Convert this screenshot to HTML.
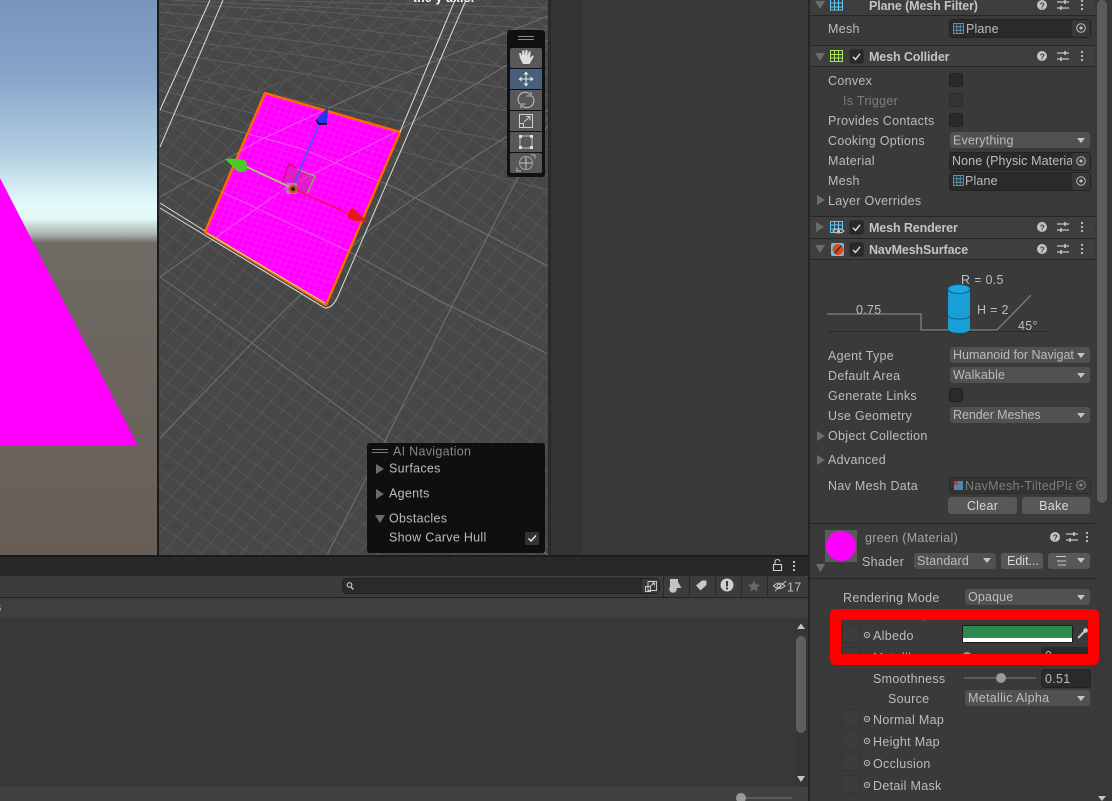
<!DOCTYPE html>
<html><head><meta charset="utf-8"><title>Unity Editor</title>
<style>
html,body{margin:0;padding:0;background:#383838;overflow:hidden}
svg{display:block;position:absolute;left:0;top:0;filter:blur(.3px)}
text{font-family:"Liberation Sans",sans-serif;font-size:12.5px;letter-spacing:.3px;fill:#bcbcbc}
.b{font-weight:bold;fill:#c4c4c4;letter-spacing:-.12px}
.d{fill:#7d7d7d}
.w{fill:#d8d8d8}
.dd{letter-spacing:.15px}
</style></head><body>
<svg width="1112" height="801" viewBox="0 0 1112 801" xmlns="http://www.w3.org/2000/svg">
<defs>
<linearGradient id="sky" x1="0" y1="0" x2="0" y2="1">
<stop offset="0" stop-color="#7896bb"/><stop offset=".3" stop-color="#86a4c9"/><stop offset=".62" stop-color="#b0cde0"/><stop offset=".84" stop-color="#e2faf9"/><stop offset=".9" stop-color="#e2f8f5"/><stop offset=".965" stop-color="#a8b2ae"/><stop offset="1" stop-color="#6f6b65"/>
</linearGradient>
<linearGradient id="gnd" x1="0" y1="0" x2="0" y2="1"><stop offset="0" stop-color="#6f6a64"/><stop offset="1" stop-color="#675e57"/></linearGradient>
<pattern id="p1" width="15" height="15" patternUnits="userSpaceOnUse" patternTransform="rotate(36)"><path d="M0 .5H15" stroke="#fff" stroke-opacity=".07"/></pattern>
<pattern id="p2" width="15" height="15" patternUnits="userSpaceOnUse" patternTransform="rotate(-50)"><path d="M0 .5H15" stroke="#fff" stroke-opacity=".07"/></pattern>
<pattern id="p3" width="6" height="6" patternUnits="userSpaceOnUse" patternTransform="rotate(16)"><path d="M0 .5H6" stroke="#ffa0ff" stroke-opacity=".13"/></pattern>
<pattern id="p4" width="6" height="6" patternUnits="userSpaceOnUse" patternTransform="rotate(-67)"><path d="M0 .5H6" stroke="#ffa0ff" stroke-opacity=".13"/></pattern>
<clipPath id="sc"><rect x="159" y="0" width="389" height="555"/></clipPath>
<clipPath id="rc"><rect x="841" y="620" width="247" height="34"/></clipPath>
<g id="tri-r"><path d="M0 0L8 5L0 10Z" fill="#6c6c6c"/></g>
<g id="tri-d"><path d="M0 0H10L5 8Z" fill="#6c6c6c"/></g>
<g id="hdr"><circle cx="0" cy="0" r="5" fill="#c4c4c4"/><text x="-2.400" y="3.400" style="font-size:8.500px;font-weight:bold;fill:#3c3c3c;letter-spacing:0">?</text>
<path d="M15 -3H27M15 3H27" stroke="#c4c4c4" stroke-width="1.200"/><path d="M23 -5V-1M19 1V5" stroke="#c4c4c4" stroke-width="1.600"/>
<circle cx="40" cy="-4" r="1.100" fill="#c4c4c4"/><circle cx="40" cy="0" r="1.100" fill="#c4c4c4"/><circle cx="40" cy="4" r="1.100" fill="#c4c4c4"/></g>
<g id="chk"><rect x="0" y="0" width="13" height="13" rx="2" fill="#2a2a2a" stroke="#212121"/><path d="M3 6.800L5.500 9.400L10 3.800" fill="none" stroke="#e0e0e0" stroke-width="1.400"/></g>
<g id="box"><rect x=".5" y=".5" width="13" height="13" rx="2" fill="#2a2a2a" stroke="#212121"/></g>
<g id="mesh"><path d="M.5 .5H10.500V10.500H.5ZM3.800 .5V10.500M7.200 .5V10.500M.5 3.800H10.500M.5 7.200H10.500" fill="none" stroke="#5da8c8" stroke-width="1" opacity=".85"/></g>
<g id="tgt"><circle cx="0" cy="0" r="4.300" fill="none" stroke="#bdbdbd"/><circle cx="0" cy="0" r="1.600" fill="#bdbdbd"/></g>
<g id="pick"><circle cx="0" cy="0" r="2.600" fill="none" stroke="#b8b8b8"/><circle cx="0" cy="0" r=".8" fill="#b8b8b8"/></g>
<g id="sq"><rect x=".5" y=".5" width="17" height="17" fill="#3c3c3c" stroke="#343434"/></g>
<g id="arr"><path d="M0 0H8L4 5Z" fill="#c4c4c4"/></g>
</defs>

<!-- base -->
<rect width="1112" height="801" fill="#383838"/>

<!-- game view -->
<rect x="0" y="0" width="157" height="243" fill="url(#sky)"/>
<rect x="0" y="243" width="157" height="312" fill="url(#gnd)"/>
<path d="M0 178L137.500 445H0Z" fill="#ff00ff"/>
<rect x="157" y="0" width="2" height="555" fill="#1b1b1b"/>

<!-- scene view -->
<g clip-path="url(#sc)">
<rect x="159" y="0" width="389" height="555" fill="#474747"/>
<rect x="159" y="0" width="389" height="555" fill="url(#p1)"/>
<rect x="159" y="0" width="389" height="555" fill="url(#p2)"/>
<g fill="none" stroke="#5e5e5e" stroke-width="1">
<path d="M159 12L300 24L548 50M159 24L330 45L548 72M159 38L300 55L548 95M159 52L300 73L548 118M159 72L320 105L548 150M159 90L300 125L548 190"/>
<path d="M159 4L300 10L548 30M170 0L548 18M250 0L548 8"/>
<path d="M159 34L250 18L350 0M159 60L300 30L420 0M159 90L300 50L480 0M159 130L300 75L548 8" stroke="#565656"/>
</g>
<g fill="none" stroke="#727272" stroke-width="1">
<path d="M160 110L300 148L400 190L548 266"/>
<path d="M160 163L346 250L438 300L546 353"/>
<path d="M160 277L193 300L252 343L385 441L548 555"/>
<path d="M160 197L260 140L400 75L548 16"/>
<path d="M160 277L287 187L400 130L548 40"/>
<path d="M160 438L252 343L295 300L373 227L470 160L548 110"/>
<path d="M327 555L385 441L455 300L515 183L548 125"/>
</g>
<path d="M205 232L265 93L400 132L326 305Z" fill="#ff00ff"/>
<clipPath id="qc"><path d="M205 232L265 93L400 132L326 305Z"/></clipPath>
<g clip-path="url(#qc)">
<rect x="200" y="90" width="205" height="220" fill="url(#p3)"/>
<rect x="200" y="90" width="205" height="220" fill="url(#p4)"/>
<g fill="none" stroke="#e070e0" stroke-width="1" opacity=".8">
<path d="M160 163L346 250L438 300M160 277L287 187L400 130M160 110L300 148L400 190M160 197L260 140L400 75"/>
</g>
</g>
<path d="M205 232L265 93L400 132L326 305Z" fill="none" stroke="#ff6a00" stroke-width="2.400" stroke-linejoin="round"/>
<path d="M207 233L325 303" stroke="#c4f08c" stroke-width="1" fill="none"/>
<g fill="none" stroke="#dcdcdc" stroke-width="1">
<path d="M210 0L160 110M223 0L160 147M455 0L400 132"/>
<path d="M466 0L338 296Q333 308 325 308L160 208M160 203L205 231"/>
</g>
<!-- gizmo -->
<path d="M282 183L289 164L315 176L307 195Z" fill="#c830a0" fill-opacity=".55"/>
<path d="M282 183L289 164L297 168" fill="none" stroke="#d00060" stroke-width="1"/>
<path d="M297 169L315 176L307 194" fill="none" stroke="#80d050" stroke-width="1"/>
<path d="M292 188L247 167" stroke="#a8d868" stroke-width="1.600"/>
<path d="M292 188L349 214" stroke="#f01048" stroke-width="1.400"/>
<path d="M292 188L322 118" stroke="#5050ff" stroke-width="1.600"/>
<path d="M225 159Q236 158 245 160Q249 166 246 171Q240 174 236 170Z" fill="#50c828"/>
<path d="M368 222L353 208Q347 211 348 217Q350 221 357 221Z" fill="#e81818"/>
<path d="M328 107L316 120L318 123L327 124Z" fill="#2038ee"/>
<path d="M316 120L319 124L327 124" stroke="#0a0a30" stroke-width="1.600" fill="none"/>
<rect x="286" y="183" width="11" height="11" rx="2" fill="#c090d8" opacity=".7"/>
<circle cx="293" cy="189" r="4.500" fill="#c06010"/>
<circle cx="293" cy="189" r="2.200" fill="#302010"/>
<text x="413" y="2" style="font-weight:bold;fill:#fff;font-size:12px">the y axis.</text>

<!-- tools overlay -->
<rect x="507" y="30" width="38" height="147" rx="3" fill="#111"/>
<path d="M518 36.500H534M518 39.500H534" stroke="#8a8a8a"/>
<g fill="#585858">
<rect x="510" y="48" width="32" height="20" rx="2"/>
<rect x="510" y="90" width="32" height="20"/>
<rect x="510" y="111" width="32" height="20"/>
<rect x="510" y="132" width="32" height="20"/>
<rect x="510" y="153" width="32" height="20" rx="2"/>
</g>
<rect x="510" y="69" width="32" height="20" fill="#46607c"/>
<!-- hand -->
<path d="M520 58L519 53.500Q520 52 521 53.500L522 56L522.300 51Q523.300 49.600 524.300 51L524.800 55.500L525.500 50.500Q526.500 49.200 527.500 50.500L527.500 55.500L529 51.500Q530 50.800 530.700 52L530 58L532.500 55.500Q534 55.500 533.500 57L529.500 64H523Z" fill="#dedede"/>
<!-- move -->
<path d="M526 73V85M520 79H532" stroke="#e4e4e4" stroke-width="1"/>
<path d="M526 71.500L528.500 74.500H523.500ZM526 86.500L528.500 83.500H523.500ZM518.500 79L521.500 76.500V81.500ZM533.500 79L530.500 76.500V81.500Z" fill="#e8e8e8"/>
<!-- rotate -->
<path d="M520 104A6.800 6.800 0 0 1 530 94.500M532 96A6.800 6.800 0 0 1 522 105.500" fill="none" stroke="#bcbcbc" stroke-width="1.100"/>
<path d="M531 91.500V96H526.500M521 108.500V104H525.500" fill="none" stroke="#bcbcbc" stroke-width="1"/>
<!-- scale -->
<path d="M519.500 114.500H532.500V127.500H519.500ZM519.500 123.500H523.500V127.500M524 122L530 116.500M526 116.500H530V120.500" fill="none" stroke="#d0d0d0" stroke-width="1"/>
<!-- rect -->
<path d="M521 136H531M521 148H531M520 137V147M532 137V147" stroke="#c0c0c0"/>
<g fill="#dedede"><rect x="519" y="135" width="3" height="3"/><rect x="530" y="135" width="3" height="3"/><rect x="519" y="146" width="3" height="3"/><rect x="530" y="146" width="3" height="3"/></g>
<!-- transform -->
<circle cx="526" cy="163" r="6.500" fill="none" stroke="#a4a4a4"/>
<path d="M526 157V169M520 163H532" stroke="#c4c4c4"/>
<path d="M531 155H535V158.500M521 171H517V167.500" fill="none" stroke="#b4b4b4"/>

<!-- AI nav overlay -->
<rect x="367" y="443" width="178" height="110" rx="3" fill="#0f0f0f"/>
<path d="M372 449.500H388M372 452.500H388" stroke="#7a7a7a"/>
<text x="393" y="455.500" class="d" style="fill:#888">AI Navigation</text>
<use href="#tri-r" x="376" y="464"/><text x="389" y="472.500">Surfaces</text>
<use href="#tri-r" x="376" y="489"/><text x="389" y="497.500">Agents</text>
<use href="#tri-d" x="375" y="515"/><text x="389" y="522.500">Obstacles</text>
<text x="389" y="541.500">Show Carve Hull</text>
<rect x="525" y="532" width="14" height="13" rx="1.500" fill="#333"/>
<path d="M528.500 538.500L531 541L536 535.500" fill="none" stroke="#e8e8e8" stroke-width="1.400"/>
</g>

<!-- strip between scene and inspector -->
<rect x="548" y="0" width="3" height="555" fill="#2a2a2a"/>
<rect x="551" y="0" width="30" height="555" fill="#333"/>
<rect x="581" y="0" width="227" height="555" fill="#383838"/>

<!-- bottom panel -->
<rect x="0" y="555" width="808" height="2" fill="#1c1c1c"/>
<rect x="0" y="557" width="808" height="19" fill="#282828"/>
<rect x="0" y="576" width="808" height="21" fill="#3c3c3c"/>
<rect x="0" y="597" width="808" height="1" fill="#232323"/>
<rect x="0" y="598" width="808" height="20" fill="#3f3f3f"/>
<rect x="0" y="618" width="795" height="169" fill="#383838"/>
<rect x="795" y="618" width="13" height="169" fill="#363636"/>
<rect x="796" y="636" width="10" height="97" rx="5" fill="#5e5e5e"/>
<path d="M797 629H805L801 623.500Z" fill="#c4c4c4"/>
<path d="M797 776H805L801 782Z" fill="#c4c4c4"/>
<rect x="0" y="787" width="808" height="14" fill="#414141"/>
<rect x="741" y="797" width="51" height="2" fill="#5a5a5a"/>
<circle cx="741" cy="798" r="5" fill="#999"/>
<text x="-5" y="611" style="fill:#c2c2c2">s</text>
<!-- lock + dots -->
<path d="M773.500 564.500H781.500V570.500H773.500ZM775 564.500V562Q775 559.500 777.500 559.500Q779.500 559.500 780 561.500" fill="none" stroke="#d0d0d0" stroke-width="1.100"/>
<circle cx="794" cy="562" r="1.100" fill="#d0d0d0"/><circle cx="794" cy="566" r="1.100" fill="#d0d0d0"/><circle cx="794" cy="570" r="1.100" fill="#d0d0d0"/>
<!-- search -->
<rect x="342.500" y="578.500" width="317" height="15" rx="4" fill="#2a2a2a" stroke="#1f1f1f"/>
<rect x="642" y="579" width="17" height="14" rx="2" fill="#3a3a3a"/>
<circle cx="349.500" cy="585" r="2.300" fill="none" stroke="#c4c4c4" stroke-width="1.200"/><path d="M351 587L353.500 589.500" stroke="#c4c4c4" stroke-width="1.400"/>
<path d="M648 581.500H656.500V590.500H648ZM645.500 586.500H650.500V591.500H645.500ZM650.500 586L654.500 583M652 583H654.500V585.500" fill="#3a3a3a" stroke="#d0d0d0" stroke-width=".9"/>
<g stroke="#2a2a2a"><path d="M663.500 576V597M689.500 576V597M715.500 576V597M741.500 576V597M767.500 576V597"/></g>
<rect x="670" y="579" width="8" height="8" fill="#c4c4c4"/><circle cx="673" cy="589" r="3.800" fill="#c4c4c4"/><path d="M678 582L681.500 588H675.500Z" fill="#c4c4c4"/>
<path d="M696 585.500L702 580.500L706.500 580.500L706.500 585L700.500 590.500Z" fill="#c8c8c8"/>
<circle cx="727" cy="585" r="6.500" fill="#d0d0d0"/><rect x="726" y="581" width="2" height="5.500" fill="#3c3c3c"/><rect x="726" y="587.500" width="2" height="2" fill="#3c3c3c"/>
<path d="M754 580.500L755.800 584.300L760 584.800L756.900 587.500L757.800 591.500L754 589.500L750.200 591.500L751.100 587.500L748 584.800L752.200 584.300Z" fill="#6a6a6a"/>
<path d="M773.500 586Q779 580 785 586Q779 591 773.500 586ZM775 591L786 581" fill="none" stroke="#c4c4c4" stroke-width="1"/>
<circle cx="779" cy="586" r="1.800" fill="none" stroke="#c4c4c4"/>
<text x="787" y="591.500" style="fill:#bdbdbd">17</text>

<!-- INSPECTOR -->
<rect x="808" y="0" width="2" height="801" fill="#232323" opacity=".9"/>
<rect x="810" y="0" width="285" height="801" fill="#3a3a3a"/>
<rect x="1095" y="0" width="17" height="801" fill="#383838"/>
<rect x="1097" y="0" width="10" height="503" rx="5" fill="#5c5c5c"/>
<path d="M1098 796H1106L1102 801Z" fill="#c4c4c4"/>

<!-- header lines -->
<g fill="#3e3e3e"><rect x="810" y="0" width="285" height="15"/><rect x="810" y="46" width="285" height="20"/><rect x="810" y="217" width="285" height="21"/><rect x="810" y="239" width="285" height="20"/></g>
<g fill="#262626"><rect x="810" y="15" width="285" height="1"/><rect x="810" y="45" width="285" height="1"/><rect x="810" y="66" width="285" height="1"/><rect x="810" y="216" width="285" height="1"/><rect x="810" y="238" width="285" height="1"/><rect x="810" y="259" width="285" height="1"/><rect x="810" y="523" width="285" height="1"/><rect x="810" y="578" width="285" height="1"/></g>

<!-- Plane filter -->
<use href="#tri-d" x="815" y="1"/>
<path d="M830.500 -1H842.500V10H830.500ZM834.500 -1V10M838.500 -1V10M830.500 3H842.500M830.500 7H842.500" fill="none" stroke="#63c8f0"/>
<text x="869" y="10" class="b">Plane (Mesh Filter)</text>
<use href="#hdr" x="1042" y="5"/>
<text x="828" y="33">Mesh</text>
<rect x="949.500" y="19.500" width="141" height="18" rx="3" fill="#2a2a2a" stroke="#232323"/>
<rect x="1072" y="20" width="18" height="17" rx="2" fill="#383838"/>
<use href="#mesh" x="953" y="23"/><text x="966" y="33" class="dd">Plane</text><use href="#tgt" x="1081" y="28"/>

<!-- Mesh collider -->
<use href="#tri-d" x="815" y="53"/>
<path d="M830.500 50.500H842.500V61.500H830.500ZM834.500 50.500V61.500M838.500 50.500V61.500M830.500 54.500H842.500M830.500 58H842.500" fill="none" stroke="#a6e65a"/>
<use href="#chk" x="850" y="50"/>
<text x="869" y="61" class="b">Mesh Collider</text>
<use href="#hdr" x="1042" y="56"/>
<text x="828" y="85">Convex</text><use href="#box" x="949" y="73"/>
<text x="843" y="105" class="d">Is Trigger</text><rect x="949.500" y="93.500" width="13" height="13" rx="2" fill="#333" stroke="#2e2e2e"/>
<text x="828" y="125">Provides Contacts</text><use href="#box" x="949" y="113"/>
<text x="828" y="145">Cooking Options</text>
<rect x="950" y="132" width="140" height="16" rx="3" fill="#515151"/><text x="953" y="144.500" class="dd">Everything</text><use href="#arr" x="1077" y="138"/>
<text x="828" y="165">Material</text>
<rect x="949.500" y="152.500" width="141" height="18" rx="3" fill="#2a2a2a" stroke="#232323"/>
<text x="952" y="165" style="letter-spacing:.1px">None (Physic Materia</text>
<rect x="1072" y="153" width="18" height="17" rx="2" fill="#383838"/><use href="#tgt" x="1081" y="161"/>
<text x="828" y="185">Mesh</text>
<rect x="949.500" y="172.500" width="141" height="18" rx="3" fill="#2a2a2a" stroke="#232323"/>
<rect x="1072" y="173" width="18" height="17" rx="2" fill="#383838"/>
<use href="#mesh" x="953" y="175"/><text x="965" y="185" class="dd">Plane</text><use href="#tgt" x="1081" y="181"/>
<use href="#tri-r" x="817" y="195"/><text x="828" y="205">Layer Overrides</text>

<!-- Mesh renderer -->
<use href="#tri-r" x="816" y="222"/>
<path d="M830.500 221.500H842.500V232.500H830.500ZM834.500 221.500V232.500M838.500 221.500V232.500M830.500 225H842.500M830.500 229H842.500" fill="none" stroke="#63c8f0"/>
<path d="M833 231Q838.500 226.500 844 231Q838.500 235 833 231Z" fill="#3e3e3e" stroke="#d0d0d0"/><circle cx="838.500" cy="231" r="1.500" fill="#d0d0d0"/>
<use href="#chk" x="850" y="221"/>
<text x="869" y="232" class="b">Mesh Renderer</text>
<use href="#hdr" x="1042" y="227"/>

<!-- NavMeshSurface -->
<use href="#tri-d" x="815" y="245"/>
<rect x="831" y="243" width="13" height="13" rx="2" fill="#6cc0e8"/>
<circle cx="838" cy="249.500" r="5.500" fill="#e04818"/><path d="M835 253L841 246" stroke="#222" stroke-width="1.300"/>
<use href="#chk" x="850" y="243"/>
<text x="869" y="254" class="b">NavMeshSurface</text>
<use href="#hdr" x="1042" y="249"/>

<!-- diagram -->
<path d="M827 331.500H1046" stroke="#2a2a2a" fill="none"/>
<path d="M827 314H921V330H997L1031 295" stroke="#757575" stroke-width="1.600" fill="none"/>
<path d="M948 289V328Q948 333 959 333Q970 333 970 328V289Z" fill="#189fd8"/>
<ellipse cx="959" cy="289" rx="11" ry="4.500" fill="#1ca7de" stroke="#0f5f80"/>
<path d="M948 315Q948 319 959 319Q970 319 970 315" fill="none" stroke="#0f5f80"/>
<text x="961" y="284" style="font-size:12.500px">R = 0.5</text>
<text x="856" y="314">0.75</text>
<text x="977" y="314">H = 2</text>
<text x="1018" y="330">45°</text>

<!-- Nav settings -->
<text x="828" y="360">Agent Type</text>
<rect x="950" y="347" width="140" height="16" rx="3" fill="#515151"/><text x="953" y="359" style="letter-spacing:0">Humanoid for Navigat</text><use href="#arr" x="1077" y="353"/>
<text x="828" y="380">Default Area</text>
<rect x="950" y="367" width="140" height="16" rx="3" fill="#515151"/><text x="953" y="379" class="dd">Walkable</text><use href="#arr" x="1077" y="373"/>
<text x="828" y="400">Generate Links</text><use href="#box" x="949" y="388"/>
<text x="828" y="420">Use Geometry</text>
<rect x="950" y="407" width="140" height="16" rx="3" fill="#515151"/><text x="953" y="419" style="letter-spacing:-.05px">Render Meshes</text><use href="#arr" x="1077" y="413"/>
<use href="#tri-r" x="817" y="431"/><text x="828" y="440">Object Collection</text>
<use href="#tri-r" x="817" y="455"/><text x="828" y="464">Advanced</text>
<text x="828" y="490">Nav Mesh Data</text>
<rect x="949.500" y="477.500" width="141" height="16" rx="3" fill="#333" stroke="#2c2c2c"/>
<rect x="954" y="481" width="9" height="9" fill="#4f87a8"/><rect x="954" y="481" width="4" height="4" fill="#b04040"/>
<text x="965" y="490" class="d" style="fill:#7e7e7e">NavMesh-TiltedPla</text>
<rect x="1072" y="478" width="18" height="15" fill="#383838"/>
<use href="#tgt" x="1081" y="485" opacity=".6"/>
<rect x="948" y="497" width="69" height="17" rx="3" fill="#585858"/><text x="982.500" y="510" text-anchor="middle" class="w">Clear</text>
<rect x="1022" y="497" width="68" height="17" rx="3" fill="#585858"/><text x="1054" y="510" text-anchor="middle" class="w">Bake</text>

<!-- Material -->
<rect x="825" y="530" width="32" height="32" fill="#5a5a5a"/>
<circle cx="841" cy="546" r="15" fill="#ff00ff"/>
<path d="M816 564H825L820.500 572Z" fill="#6c6c6c"/>
<text x="865" y="542" style="fill:#a4a4a4">green (Material)</text>
<circle cx="1055" cy="537" r="5" fill="#c4c4c4"/><text x="1052.600" y="540.400" style="font-size:8.500px;font-weight:bold;fill:#3c3c3c;letter-spacing:0">?</text>
<path d="M1066 534H1078M1066 540H1078" stroke="#c4c4c4" stroke-width="1.200"/><path d="M1074 532V536M1070 538V542" stroke="#c4c4c4" stroke-width="1.600"/>
<circle cx="1087" cy="533" r="1.100" fill="#c4c4c4"/><circle cx="1087" cy="537" r="1.100" fill="#c4c4c4"/><circle cx="1087" cy="541" r="1.100" fill="#c4c4c4"/>
<text x="862" y="566">Shader</text>
<rect x="914" y="553" width="82" height="16" rx="3" fill="#515151"/><text x="917" y="565" class="dd">Standard</text><use href="#arr" x="983" y="558"/>
<rect x="1001" y="553" width="42" height="16" rx="3" fill="#585858"/><text x="1007" y="565" class="w" style="letter-spacing:0">Edit...</text>
<rect x="1048" y="553" width="42" height="16" rx="3" fill="#585858"/>
<path d="M1056 556.500H1066M1057 561H1066M1058 565H1066" stroke="#c8c8c8"/><use href="#arr" x="1077" y="558"/>

<text x="843" y="602">Rendering Mode</text>
<rect x="965" y="589" width="125" height="16" rx="3" fill="#515151"/><text x="968" y="601" class="dd">Opaque</text><use href="#arr" x="1077" y="595"/>

<g clip-path="url(#rc)">
<use href="#sq" x="842" y="625"/>
<use href="#pick" x="867" y="635"/><text x="873" y="640">Albedo</text>
<rect x="962.500" y="625.500" width="110" height="17" fill="#000"/>
<rect x="963" y="626" width="109" height="12" fill="#2e8b4e"/>
<rect x="963" y="638" width="109" height="4" fill="#fff"/>
<path d="M1078 638L1085 631" stroke="#c8c8c8" stroke-width="2"/><circle cx="1085.500" cy="630.500" r="2.300" fill="#d0d0d0"/>
<use href="#sq" x="842" y="647"/>
<use href="#pick" x="867" y="657"/><text x="873" y="662">Metallic</text>
<circle cx="967" cy="657" r="5" fill="#999"/>
<rect x="1041" y="647" width="50" height="18" rx="3" fill="#2a2a2a"/><text x="1045" y="660">0</text>
<text x="873" y="618" style="fill:#c2c2c2">Main Maps</text>
</g>
<path fill-rule="evenodd" d="M836 609H1093Q1099 609 1099 615V659Q1099 665 1093 665H836Q830 665 830 659V615Q830 609 836 609ZM841 620V654H1088V620Z" fill="#ff0000"/>

<text x="873" y="683">Smoothness</text>
<rect x="964" y="677" width="72" height="2" fill="#5c5c5c"/>
<circle cx="1001" cy="678" r="5" fill="#999"/>
<rect x="1041.500" y="669.500" width="49" height="18" rx="3" fill="#2a2a2a" stroke="#232323"/><text x="1045" y="683">0.51</text>
<text x="888" y="703">Source</text>
<rect x="965" y="690" width="125" height="16" rx="3" fill="#515151"/><text x="968" y="702">Metallic Alpha</text><use href="#arr" x="1077" y="696"/>
<use href="#sq" x="842" y="709"/><use href="#pick" x="867" y="719"/><text x="873" y="724">Normal Map</text>
<use href="#sq" x="842" y="731"/><use href="#pick" x="867" y="741"/><text x="873" y="746">Height Map</text>
<use href="#sq" x="842" y="753"/><use href="#pick" x="867" y="763"/><text x="873" y="768">Occlusion</text>
<use href="#sq" x="842" y="775"/><use href="#pick" x="867" y="785"/><text x="873" y="790">Detail Mask</text>
</svg>
</body></html>
